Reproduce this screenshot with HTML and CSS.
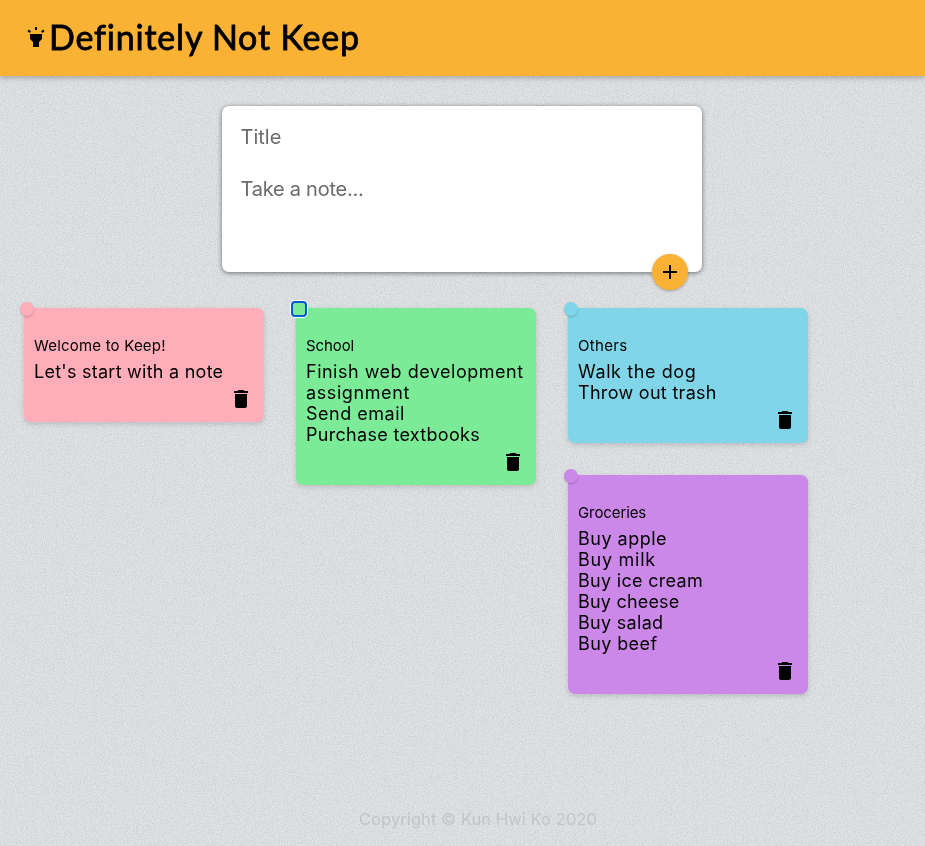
FILE: index.html
```html
<!DOCTYPE html>
<html lang="en">
<head>
<meta charset="utf-8">
<title>Definitely Not Keep</title>
<link rel="stylesheet" href="styles.css">
</head>
<body>
<svg class="texture" aria-hidden="true">
  <filter id="grain" x="0" y="0" width="100%" height="100%" color-interpolation-filters="sRGB">
    <feTurbulence type="fractalNoise" baseFrequency="0.9" numOctaves="2" seed="4"/>
    <feColorMatrix values="0 0 0 0 .7  0 0 0 0 .74  0 0 0 0 .76  1.3 0 0 0 -.54"/>
  </filter>
  <rect width="100%" height="100%" filter="url(#grain)"/>
</svg>
<svg class="sprite">
  <symbol id="trash" viewBox="0 0 24 24"><path d="M6 19c0 1.1.9 2 2 2h8c1.1 0 2-.9 2-2V7H6v12zM19 4h-3.5l-1-1h-5l-1 1H5v2h14V4z"/></symbol>
</svg>
<header class="header">
  <svg class="icon" viewBox="0 0 24 24"><path d="M6 14l3 3v5h6v-5l3-3V9H6zM11 2h2v3h-2zM3.5 5.88l1.41-1.42 2.12 2.13L5.62 8zM16.96 6.59l2.12-2.13 1.42 1.42L18.38 8z"/></svg>
  <h1 class="brand">Definitely Not Keep</h1>
</header>
<main>
  <form class="composer">
    <span>Title</span>
    <span class="note-hint">Take a note...</span>
    <button class="add" type="button" aria-label="Add"><svg class="icon" viewBox="0 0 24 24"><path d="M19 13h-6v6h-2v-6H5v-2h6V5h2v6h6v2z"/></svg></button>
  </form>
  <section class="board">
    <div class="column">
      <article class="card pink">
        <i class="dot"></i>
        <h2 class="s20">Welcome to Keep!</h2>
        <p class="s25">Let's start with a note</p>
        <svg class="icon trash"><use href="#trash"/></svg>
      </article>
    </div>
    <div class="column">
      <article class="card green">
        <i class="dot focused"></i>
        <h2>School</h2>
        <p class="s50">Finish web development</p>
        <p class="s60">assignment</p>
        <p class="s50">Send email</p>
        <p class="s30">Purchase textbooks</p>
        <svg class="icon trash"><use href="#trash"/></svg>
      </article>
    </div>
    <div class="column">
      <article class="card blue">
        <i class="dot"></i>
        <h2 class="s30">Others</h2>
        <p class="s60">Walk the dog</p>
        <p class="s30">Throw out trash</p>
        <svg class="icon trash"><use href="#trash"/></svg>
      </article>
      <article class="card purple">
        <i class="dot"></i>
        <h2>Groceries</h2>
        <p class="s50">Buy apple</p>
        <p class="s75">Buy milk</p>
        <p class="s30">Buy ice cream</p>
        <p class="s20">Buy cheese</p>
        <p class="s30">Buy salad</p>
        <p class="s40">Buy beef</p>
        <svg class="icon trash"><use href="#trash"/></svg>
      </article>
    </div>
  </section>
</main>
<footer class="footer">Copyright © Kun Hwi Ko 2020</footer>
</body>
</html>
```
FILE: styles.css
```css
* { box-sizing: border-box; }
body {
  margin: 0;
  height: 846px;
  display: flex;
  flex-direction: column;
  overflow: hidden;
  background: #e0e2e4;
  color: #000;
  font-family: Inter, "Open Sans", sans-serif;
}
.texture { position: fixed; inset: 0; z-index: -1; width: 100%; height: 100%; }
.sprite { display: none; }
.icon { display: block; width: 24px; height: 24px; flex: none; }
.header {
  height: 76px;
  flex: none;
  display: flex;
  align-items: center;
  padding: 0 24px 2px;
  background: #f9b233;
  box-shadow: 0 2px 5px rgba(0, 0, 0, .25);
}
.brand {
  margin: 0 0 0 1px;
  font: 400 34px/40px Lato, sans-serif;
  letter-spacing: .8px;
  -webkit-text-stroke: .8px #000;
  white-space: nowrap;
}
main { flex: 1; }
.composer {
  position: relative;
  display: flex;
  flex-direction: column;
  gap: 28px;
  width: 480px;
  height: 166px;
  margin: 30px auto 36px 222px;
  padding: 19px 18.5px;
  border-radius: 7px;
  background: #fff;
  box-shadow: 0 1px 5px rgba(0, 0, 0, .5);
  color: #6b6b6b;
  font-size: 20px;
  line-height: 24px;
}
.note-hint { letter-spacing: -.25px; }
.add {
  position: absolute;
  right: 14px;
  bottom: -18px;
  width: 36px;
  height: 36px;
  padding: 6px;
  border: 0;
  border-radius: 50%;
  background: #f9b233;
  box-shadow: 0 1px 3px rgba(0, 0, 0, .3);
}
.board { display: flex; align-items: flex-start; gap: 32px; padding-left: 24px; }
.column { display: flex; flex-direction: column; gap: 32px; width: 240px; }
.card {
  position: relative;
  padding: 28px 10px 11px;
  border-radius: 7px;
  box-shadow: 0 2px 5px rgba(0, 0, 0, .15);
}
.card h2 { margin: 0 0 5px; font-size: 15px; font-weight: 400; line-height: 20px; letter-spacing: -.1px; }
.card p { margin: 0; font-size: 18px; line-height: 21px; white-space: nowrap; }
.card .s20 { letter-spacing: .2px; }
.card .s25 { letter-spacing: .25px; }
.card .s30 { letter-spacing: .3px; }
.card .s40 { letter-spacing: .4px; }
.card .s50 { letter-spacing: .5px; }
.card .s60 { letter-spacing: .6px; }
.card .s75 { letter-spacing: .75px; }
.trash { margin: 5px 1px 0 auto; }
.dot {
  position: absolute;
  left: -4px;
  top: -6px;
  width: 14px;
  height: 14px;
  border-radius: 50%;
  background: inherit;
  box-shadow: 0 1px 2px rgba(0, 0, 0, .2);
}
.focused {
  border-radius: 3px;
  outline: 2px solid #0b57d0;
  outline-offset: -1px;
  box-shadow: 0 0 0 2px #fff;
}
.pink { background: #ffadb9; }
.green { background: #7ceb98; }
.blue { background: #81d5e9; }
.purple { background: #cb88e8; }
.footer {
  flex: none;
  height: 54px;
  line-height: 54px;
  padding-left: 359px;
  color: #c3c4c4;
  font-size: 16.5px;
  letter-spacing: .07px;
}
```
